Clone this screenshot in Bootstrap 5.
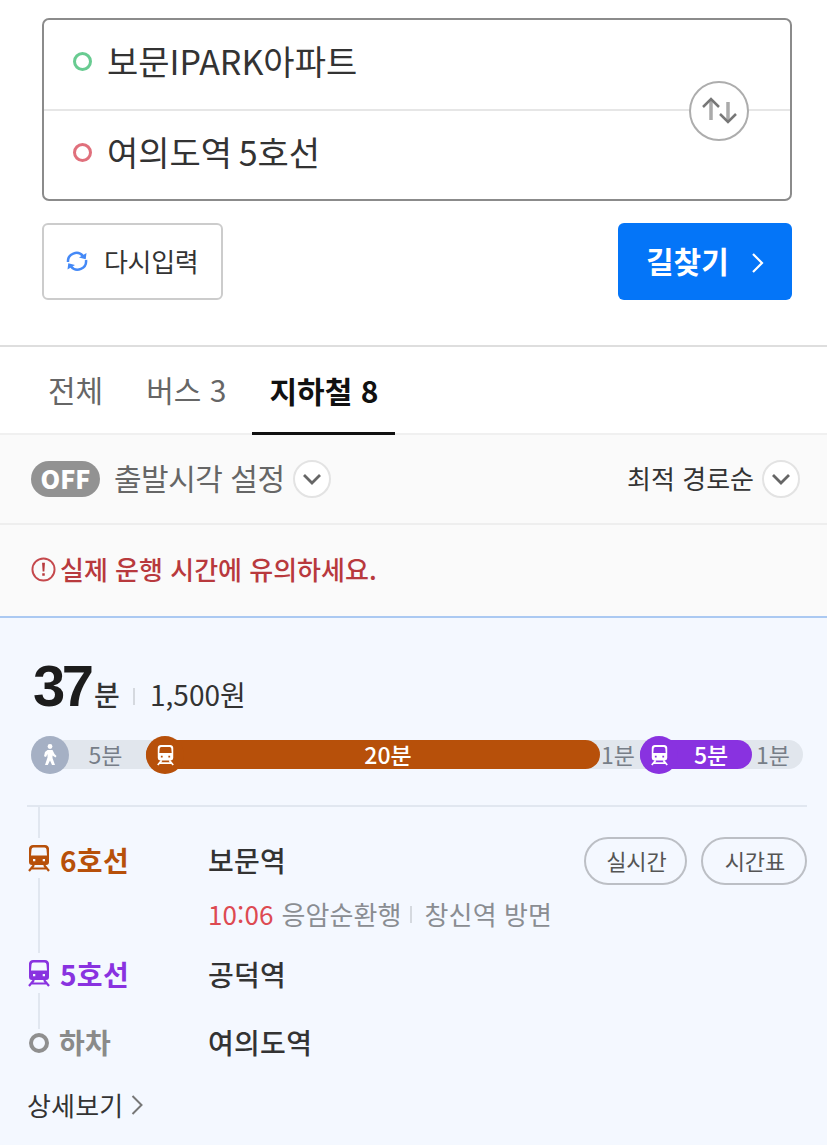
<!DOCTYPE html>
<html lang="ko">
<head>
    <meta charset="UTF-8">
    <meta name="viewport" content="width=device-width, initial-scale=1.0">
    <title>길찾기</title>
    <link href="https://cdn.jsdelivr.net/npm/bootstrap@5.3.0/dist/css/bootstrap.min.css" rel="stylesheet">
    <style>
        body {
            font-family: "Noto Sans CJK KR", sans-serif;
            color: #333;
            background: #fff;
            line-height: 1.2;
            white-space: nowrap;
        }
        svg { display: block; flex: none; }

        /* Search form */
        .search-area { padding: 18px 35px 45px 42px; height: 345px; }
        .search-box { height: 183px; border: 2px solid #8b8b8b; border-radius: 7px; }
        .search-field { height: 89px; padding: 0 0 6px 29px; font-size: 34px; word-spacing: -3px; }
        .search-field + .search-field { height: 90px; border-top: 2px solid #e6e6e6; }
        .point { width: 19px; height: 19px; border: 3px solid #68cb91; border-radius: 50%; margin-right: 15px; }
        .point-end { border-color: #e0707c; }
        .swap-btn { top: 61px; right: 41px; width: 60px; height: 60px; border: 2px solid #adadad; border-radius: 50%; background: #fff; }
        .form-buttons { margin-top: 22px; }
        .btn-reset { width: 181px; height: 77px; border: 2px solid #ccc; border-radius: 6px; padding: 0 0 2px 22px; font-size: 26px; letter-spacing: -.3px; color: #333; background: #fff; }
        .btn-find { width: 174px; height: 77px; border-radius: 6px; padding: 0 0 0 28px; font-size: 30px; font-weight: 700; color: #fff; background: #0475f8; }
        .btn-find span { margin-right: 22px; padding-bottom: 3px; }

        /* Tabs */
        .route-tabs { height: 90px; border-top: 2px solid #dedede; border-bottom: 2px solid #f0f0f0; padding-left: 31px; font-size: 30px; color: #666; }
        .route-tab { height: 88px; margin-right: 9px; padding: 0 17px 4px; }
        .route-tab.active { padding-bottom: 0; font-weight: 700; color: #111; border-bottom: 3px solid #111; }

        /* Departure time and sort order */
        .option-bar { height: 90px; background: #fafafa; border-bottom: 2px solid #eee; padding: 0 27px 0 31px; }
        .off-label { width: 69px; height: 36px; padding-bottom: 2px; border-radius: 18px; background: #929292; color: #fff; font-size: 25px; font-weight: 900; }
        .depart { font-size: 30px; letter-spacing: -.5px; color: #666; margin: 0 8px 0 14px; padding-bottom: 4px; }
        .sort-by { font-size: 26px; margin-right: 8px; padding-bottom: 3px; }
        .more-btn { width: 38px; height: 38px; border: 2px solid #e3e3e3; border-radius: 50%; background: #fff; }
        .notice { height: 93px; background: #fafafa; border-bottom: 2px solid #abc9f2; padding: 0 0 3px 31px; color: #b8393d; font-size: 26px; font-weight: 500; }

        /* Selected route */
        .route { height: 527px; background: #f4f8ff; padding: 0 20px 0 27px; }
        .summary { height: 104px; padding: 34px 0 0 6px; }
        .minutes { width: 61px; font: 700 58px/68px "Liberation Sans", sans-serif; letter-spacing: -3.500px; color: #1c1c1c; }
        .minute-unit { font-size: 28px; font-weight: 500; width: 26px; margin: 26px 13px 0 0; }
        .thin-bar { width: 2px; height: 17px; background: #d5d9df; }
        .summary .thin-bar { margin: 36px 15px 0 0; }
        .fare { font-size: 28px; margin-top: 26px; }

        .ride-bar { width: 772px; height: 29px; margin: 18px 0 0 4px; border-radius: 15px; background: #e1e6ed; font-size: 23px; color: #777e88; }
        .ride { height: 29px; color: #fff; font-weight: 500; border-radius: 15px; }
        .ride-icon { width: 38px; height: 38px; border-radius: 50%; flex: none; }
        .bg-walk { background: #a5b0c4; }
        .bg-line6 { background: #b7500a; }
        .bg-line5 { background: #8932e0; }
        .text-line6 { color: #b7500a; }
        .text-line5 { color: #8932e0; }

        /* Stops */
        .stops { margin-top: 36px; border-top: 2px solid #e1e7f0; font-size: 28px; letter-spacing: .3px; }
        .track { width: 24px; margin-right: 9px; }
        .track-line { width: 2px; background: #e1e7f0; }
        .track-start { height: 31px; }
        .line-name { width: 148px; font-weight: 700; }
        .stop-name { font-weight: 500; }
        .pill-btn { width: 103px; height: 48px; border: 2px solid #bcbfc5; border-radius: 24px; padding: 0 0 2px 2px; font-size: 22px; color: #555; background: transparent; }
        .pill-time { width: 106px; margin-left: 14px; }
        .stop-1 { height: 146px; }
        .stop-2 { height: 76px; }
        .stop-3 { height: 28px; }
        .stop-first { padding-top: 30px; }
        .stop-row { height: 44px; }
        .direction { height: 32px; margin: 13px 0 0 148px; font-size: 26px; letter-spacing: .1px; color: #8a8d92; }
        .next-time { color: #dd4a52; margin-right: 8px; }
        .direction .thin-bar { margin: 0 13px 0 8px; }
        .alight { width: 20px; height: 20px; border: 4px solid #8f8f8f; border-radius: 50%; margin-top: 4px; }
        .alight-text { color: #8a8a8a; text-indent: -1px; }
        .more-link { margin-top: 32px; height: 32px; font-size: 26px; letter-spacing: .2px; }
    </style>
</head>
<body>
    <!-- Icon shapes used more than once -->
    <svg class="d-none">
        <symbol id="train" viewBox="0 0 22 28">
            <path fill="currentColor" fill-rule="evenodd" d="M5 1h12q3.500 0 4 3.500V18q0 3-3 3H4q-3 0-3-3V4.500q.5-3.500 4-3.500zM5.500 3.500q-1.800 0-2 2l-.5 6h16l-.5-6q-.2-2-2-2zM5 15v2.300h2.300V15zM14.700 15v2.300H17V15z"/>
            <path fill="none" stroke="currentColor" stroke-width="2.200" d="M6 21l-5 6M16 21l5 6M4 24.500h14"/>
        </symbol>
        <symbol id="chevron" viewBox="0 0 20 12">
            <path fill="none" stroke="#666" stroke-width="2.800" d="M2 2l8 8 8-8"/>
        </symbol>
    </svg>

    <section class="search-area">
        <div class="search-box position-relative">
            <div class="search-field d-flex align-items-center"><span class="point"></span>보문IPARK아파트</div>
            <div class="search-field d-flex align-items-center"><span class="point point-end"></span>여의도역 5호선</div>
            <button class="swap-btn position-absolute d-flex align-items-center justify-content-center p-0" aria-label="swap">
                <svg width="36" height="28" viewBox="0 0 36 28" fill="none" stroke="#aaa" stroke-width="3.500">
                    <path d="M10 23V3M27 5v19"/>
                    <path stroke="#777" stroke-width="2.500" d="M2 10l8-8 8 8M19 17l8 8 8-8"/>
                </svg>
            </button>
        </div>
        <div class="form-buttons d-flex justify-content-between">
            <button class="btn-reset d-flex align-items-center">
                <svg class="me-3" width="22" height="22" viewBox="0 0 22 22">
                    <path fill="none" stroke="#4489f7" stroke-width="2.500" d="M2 12A8.500 8.500 0 0 1 17 6M20 10A8.500 8.500 0 0 1 5 16.500"/>
                    <path fill="#4489f7" d="M20.500 3l-.8 6.200-6.700-1.700zM1.500 19.500l.8-6.200L9 15z"/>
                </svg>
                다시입력
            </button>
            <button class="btn-find border-0 d-flex align-items-center">
                <span>길찾기</span>
                <svg width="14" height="22" viewBox="0 0 14 22"><path fill="none" stroke="#fff" stroke-width="2.200" d="M2 3l9 9-9 9"/></svg>
            </button>
        </div>
    </section>

    <nav class="route-tabs d-flex">
        <div class="route-tab d-flex align-items-center">전체</div>
        <div class="route-tab d-flex align-items-center">버스 3</div>
        <div class="route-tab active d-flex align-items-center">지하철 8</div>
    </nav>

    <div class="option-bar d-flex align-items-center justify-content-between">
        <div class="d-flex align-items-center">
            <span class="off-label d-flex align-items-center justify-content-center">OFF</span>
            <span class="depart">출발시각 설정</span>
            <span class="more-btn d-flex align-items-center justify-content-center"><svg width="20" height="12"><use href="#chevron"/></svg></span>
        </div>
        <div class="d-flex align-items-center">
            <span class="sort-by">최적 경로순</span>
            <span class="more-btn d-flex align-items-center justify-content-center"><svg width="20" height="12"><use href="#chevron"/></svg></span>
        </div>
    </div>

    <div class="notice d-flex align-items-center">
        <svg class="me-1" width="25" height="25" viewBox="0 0 26 26">
            <circle cx="13" cy="13" r="11.500" fill="none" stroke="#c5484c" stroke-width="2"/>
            <path fill="#b8393d" d="M11.500 6h3l-.6 9h-1.800zM11.700 17h2.600v2.600h-2.600z"/>
        </svg>
        실제 운행 시간에 유의하세요.
    </div>

    <main class="route">
        <div class="summary d-flex align-items-start">
            <span class="minutes">37</span>
            <span class="minute-unit">분</span>
            <span class="thin-bar"></span>
            <span class="fare">1,500원</span>
        </div>

        <!-- Share of each leg in the trip -->
        <div class="ride-bar d-flex align-items-center">
            <div class="d-flex align-items-center" style="width: 14.9%">
                <span class="ride-icon bg-walk d-flex align-items-center justify-content-center">
                    <svg width="14" height="22" viewBox="0 0 14 22" fill="#fff">
                        <circle cx="7" cy="2.500" r="2.400"/>
                        <path d="M4.500 6h5l2 4 2 2-1 1.500-3-2v2.500l2.500 7H9L7 16.500 4.800 21H2l2.500-7.500V10l-1.500 3-2-.8L2 8z"/>
                    </svg>
                </span>
                <span class="flex-fill text-center pe-1">5분</span>
            </div>
            <div class="ride bg-line6 d-flex align-items-center" style="width: 58.8%">
                <span class="ride-icon bg-line6 d-flex align-items-center justify-content-center"><svg class="text-white" width="17" height="22"><use href="#train"/></svg></span>
                <span class="flex-fill text-center pe-2">20분</span>
            </div>
            <div class="text-center pe-1" style="width: 5.2%">1분</div>
            <div class="ride bg-line5 d-flex align-items-center" style="width: 14.5%">
                <span class="ride-icon bg-line5 d-flex align-items-center justify-content-center"><svg class="text-white" width="17" height="22"><use href="#train"/></svg></span>
                <span class="flex-fill text-center pe-2">5분</span>
            </div>
            <div class="ps-1" style="width: 6.6%">1분</div>
        </div>

        <div class="stops">
            <div class="stop-1 d-flex">
                <div class="track d-flex flex-column align-items-center">
                    <span class="track-line track-start"></span>
                    <svg class="text-line6 my-1" width="22" height="32"><use href="#train"/></svg>
                    <span class="track-line flex-fill"></span>
                </div>
                <div class="stop-first flex-fill">
                    <div class="d-flex align-items-center">
                        <span class="line-name text-line6">6호선</span>
                        <span class="stop-name">보문역</span>
                        <button class="pill-btn ms-auto">실시간</button>
                        <button class="pill-btn pill-time">시간표</button>
                    </div>
                    <div class="direction d-flex align-items-center">
                        <span class="next-time">10:06</span>
                        <span>응암순환행</span>
                        <span class="thin-bar"></span>
                        <span>창신역 방면</span>
                    </div>
                </div>
            </div>
            <div class="stop-2 d-flex">
                <div class="track d-flex flex-column align-items-center">
                    <svg class="text-line5 my-1" width="22" height="32"><use href="#train"/></svg>
                    <span class="track-line flex-fill"></span>
                </div>
                <div class="stop-row d-flex align-items-center">
                    <span class="line-name text-line5">5호선</span>
                    <span class="stop-name">공덕역</span>
                </div>
            </div>
            <div class="stop-3 d-flex">
                <div class="track d-flex flex-column align-items-center"><span class="alight"></span></div>
                <div class="d-flex align-items-center">
                    <span class="line-name alight-text">하차</span>
                    <span class="stop-name">여의도역</span>
                </div>
            </div>
        </div>
        <div class="more-link d-flex align-items-center">
            상세보기
            <svg class="ms-2" width="12" height="20" viewBox="0 0 12 20"><path fill="none" stroke="#777" stroke-width="2" d="M1.500 1l9 9-9 9"/></svg>
        </div>
    </main>
    <script src="https://cdn.jsdelivr.net/npm/bootstrap@5.3.0/dist/js/bootstrap.bundle.min.js"></script>
</body>
</html>
